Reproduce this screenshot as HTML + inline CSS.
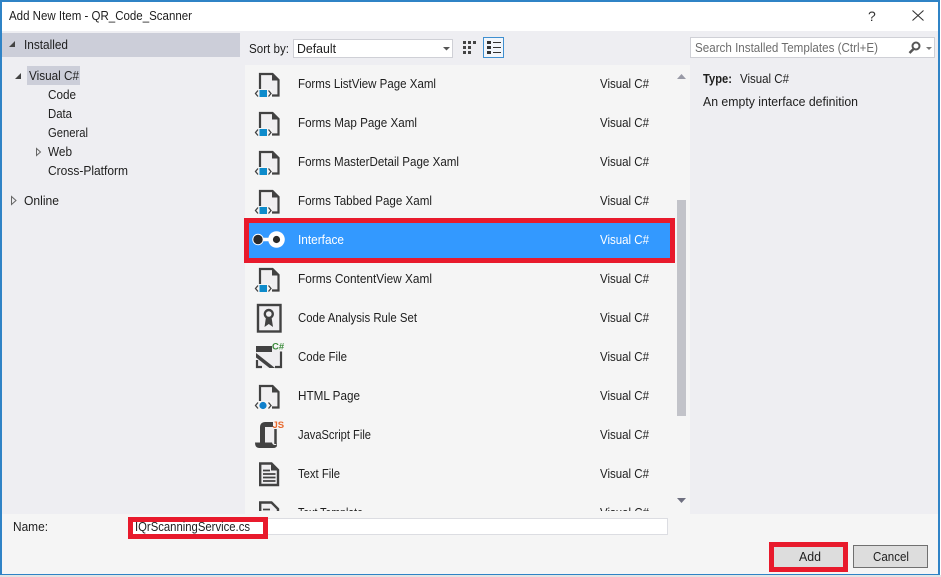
<!DOCTYPE html>
<html>
<head>
<meta charset="utf-8">
<title>Add New Item - QR_Code_Scanner</title>
<style>
html,body{margin:0;padding:0;width:941px;height:577px;overflow:hidden;background:#fff}
svg{display:block}
text{font-family:"Liberation Sans",sans-serif;font-size:12.5px;fill:#1e1e1e}
</style>
</head>
<body>
<svg width="941" height="577" viewBox="0 0 941 577" xmlns="http://www.w3.org/2000/svg">
<defs>
<g id="doc">
<path d="M260 89H272V95H278V80L272 74H260Z" fill="#f0eff1"/>
<path d="M260 89V74H272.500L278.500 80V95.500H272" fill="none" stroke="#424242" stroke-width="2.200"/>
<path d="M272 74V80.500H278" fill="#424242"/>
<path d="M258 90.500L255.500 93.500L258 96.500M268.500 90.500L271 93.500L268.500 96.500" fill="none" stroke="#424242" stroke-width="1.300"/>
</g>
<g id="docx"><use href="#doc"/><rect x="259.500" y="90" width="7.500" height="7" fill="#0e8bcb"/></g>
</defs>

<rect width="941" height="577" fill="#fff"/>
<rect x="0" y="575" width="941" height="2" fill="#e4e4e4"/>
<rect x="1" y="1" width="938" height="573" fill="#f5f5f5" stroke="#2f83c6" stroke-width="2"/>
<rect x="2" y="2" width="936" height="29" fill="#fff"/>
<rect x="2" y="31" width="936" height="483" fill="#eeeef2"/>
<rect x="2" y="514" width="936" height="60" fill="#f5f5f5"/>

<text x="9" y="20" textLength="183" lengthAdjust="spacingAndGlyphs">Add New Item - QR_Code_Scanner</text>
<text x="868" y="21" style="font-size:14px;fill:#333">?</text>
<path d="M912.500 10.500L923.500 20.500M923.500 10.500L912.500 20.500" stroke="#333" stroke-width="1.100" fill="none"/>

<rect x="2" y="33" width="238" height="24" fill="#ccced9"/>
<path d="M15 47L9 47L15 41Z" fill="#444"/>
<text x="24" y="49" textLength="44" lengthAdjust="spacingAndGlyphs">Installed</text>
<rect x="27" y="66" width="53" height="19" fill="#ccced9"/>
<path d="M21 79L15 79L21 73Z" fill="#444"/>
<text x="29" y="80" textLength="50" lengthAdjust="spacingAndGlyphs">Visual C#</text>
<text x="48" y="99" textLength="28" lengthAdjust="spacingAndGlyphs">Code</text>
<text x="48" y="118" textLength="24" lengthAdjust="spacingAndGlyphs">Data</text>
<text x="48" y="137" textLength="40" lengthAdjust="spacingAndGlyphs">General</text>
<path d="M36.500 148.500L36.500 155.500L40.500 152Z" fill="#eeeef2" stroke="#666"/>
<text x="48" y="156" textLength="24" lengthAdjust="spacingAndGlyphs">Web</text>
<text x="48" y="175" textLength="80" lengthAdjust="spacingAndGlyphs">Cross-Platform</text>
<path d="M11.500 196.500L11.500 204.500L16 200.500Z" fill="#eeeef2" stroke="#666"/>
<text x="24" y="205" textLength="35" lengthAdjust="spacingAndGlyphs">Online</text>

<text x="249" y="53" textLength="40" lengthAdjust="spacingAndGlyphs">Sort by:</text>
<rect x="293.500" y="39.500" width="159" height="18" fill="#fff" stroke="#cfd0d6"/>
<text x="297" y="53" textLength="39" lengthAdjust="spacingAndGlyphs">Default</text>
<path d="M443 47H450L446.500 50.500Z" fill="#555"/>
<g fill="#444">
<rect x="463" y="41" width="3" height="3"/><rect x="468" y="41" width="3" height="3"/><rect x="473" y="41" width="3" height="3"/>
<rect x="463" y="46" width="3" height="3"/><rect x="468" y="46" width="3" height="3"/>
<rect x="463" y="51" width="3" height="3"/><rect x="468" y="51" width="3" height="3"/>
</g>
<rect x="483.500" y="37.500" width="20" height="20" fill="#f2f6fb" stroke="#3f8fd0"/>
<g fill="#333">
<rect x="487" y="41" width="4" height="3"/><rect x="487" y="46" width="4" height="3"/><rect x="487" y="51" width="4" height="3"/>
<rect x="493" y="42" width="8" height="1"/><rect x="493" y="47" width="8" height="1"/><rect x="493" y="52" width="8" height="1"/>
</g>

<rect x="690.500" y="37.500" width="244" height="20" fill="#fff" stroke="#cfd0d6"/>
<text x="695" y="52" textLength="183" lengthAdjust="spacingAndGlyphs" style="fill:#6d6d6d">Search Installed Templates (Ctrl+E)</text>
<circle cx="916" cy="46" r="3.500" fill="none" stroke="#555" stroke-width="2"/>
<path d="M913.500 49L909.500 53" stroke="#555" stroke-width="2.500"/>
<path d="M926 47H932L929 50Z" fill="#777"/>

<rect x="245" y="65" width="445" height="446" fill="#f5f5f5"/>

<path d="M677 79L681.500 74L686 79Z" fill="#999aa6"/>
<rect x="677" y="200" width="9" height="216" fill="#c2c3c9"/>
<path d="M677 498H686L681.500 503Z" fill="#6f7080"/>

<use href="#docx"/>
<use href="#docx" y="39"/>
<use href="#docx" y="78"/>
<use href="#docx" y="117"/>
<use href="#docx" y="195"/>

<text x="298" y="88" textLength="138" lengthAdjust="spacingAndGlyphs">Forms ListView Page Xaml</text>
<text x="298" y="127" textLength="119" lengthAdjust="spacingAndGlyphs">Forms Map Page Xaml</text>
<text x="298" y="166" textLength="161" lengthAdjust="spacingAndGlyphs">Forms MasterDetail Page Xaml</text>
<text x="298" y="205" textLength="134" lengthAdjust="spacingAndGlyphs">Forms Tabbed Page Xaml</text>
<text x="298" y="283" textLength="134" lengthAdjust="spacingAndGlyphs">Forms ContentView Xaml</text>
<text x="298" y="322" textLength="119" lengthAdjust="spacingAndGlyphs">Code Analysis Rule Set</text>
<text x="298" y="361" textLength="49" lengthAdjust="spacingAndGlyphs">Code File</text>
<text x="298" y="400" textLength="62" lengthAdjust="spacingAndGlyphs">HTML Page</text>
<text x="298" y="439" textLength="73" lengthAdjust="spacingAndGlyphs">JavaScript File</text>
<text x="298" y="478" textLength="42" lengthAdjust="spacingAndGlyphs">Text File</text>

<g>
<text x="600" y="88" textLength="49" lengthAdjust="spacingAndGlyphs">Visual C#</text>
<text x="600" y="127" textLength="49" lengthAdjust="spacingAndGlyphs">Visual C#</text>
<text x="600" y="166" textLength="49" lengthAdjust="spacingAndGlyphs">Visual C#</text>
<text x="600" y="205" textLength="49" lengthAdjust="spacingAndGlyphs">Visual C#</text>
<text x="600" y="283" textLength="49" lengthAdjust="spacingAndGlyphs">Visual C#</text>
<text x="600" y="322" textLength="49" lengthAdjust="spacingAndGlyphs">Visual C#</text>
<text x="600" y="361" textLength="49" lengthAdjust="spacingAndGlyphs">Visual C#</text>
<text x="600" y="400" textLength="49" lengthAdjust="spacingAndGlyphs">Visual C#</text>
<text x="600" y="439" textLength="49" lengthAdjust="spacingAndGlyphs">Visual C#</text>
<text x="600" y="478" textLength="49" lengthAdjust="spacingAndGlyphs">Visual C#</text>
<text x="600" y="517" textLength="49" lengthAdjust="spacingAndGlyphs">Visual C#</text>
</g>

<!-- selected row -->
<rect x="246.500" y="220.500" width="426" height="40" fill="#3399ff" stroke="#e81a2c" stroke-width="5"/>
<text x="298" y="244" textLength="46" lengthAdjust="spacingAndGlyphs" style="fill:#fff">Interface</text>
<text x="600" y="244" textLength="49" lengthAdjust="spacingAndGlyphs" style="fill:#fff">Visual C#</text>
<path d="M260 239.500H270" stroke="#fff" stroke-width="3.500"/>
<circle cx="258" cy="239.500" r="5.200" fill="#2b2b2b" stroke="#fff" stroke-width="1"/>
<circle cx="276.500" cy="239.500" r="8.300" fill="#fff"/>
<circle cx="276.500" cy="239.500" r="3.600" fill="#2b2b2b"/>

<!-- code analysis -->
<rect x="258" y="305" width="22.500" height="26.500" fill="#f0eff1" stroke="#424242" stroke-width="2.400"/>
<circle cx="268.800" cy="314" r="4" fill="none" stroke="#424242" stroke-width="2.400"/>
<path d="M266 317L264.500 327L268.800 324L273 327L271.500 317Z" fill="#424242"/>

<!-- code file -->
<path d="M256 346H273L282 352V368H256Z" fill="#efeef0"/>
<path d="M256 346H272V352H256Z" fill="#424242"/>
<path d="M256 353L275 368H269.500L256 357.500Z" fill="#424242"/>
<path d="M257 360V367H262M275 367H281V351.500" fill="none" stroke="#424242" stroke-width="2.200"/>
<text x="272" y="349.500" font-weight="bold" style="font-size:9.500px;fill:#3a8a3a">C#</text>

<!-- html -->
<use href="#doc" y="312"/>
<circle cx="263" cy="405.500" r="3.600" fill="#0e7fcb"/>

<!-- js -->
<path d="M265 427H274V443H265Z" fill="#f0eff1"/>
<path d="M273 424.500H265Q262.500 424.500 262.500 427V444" fill="none" stroke="#424242" stroke-width="5"/>
<path d="M275.500 429V444" fill="none" stroke="#424242" stroke-width="2.500"/>
<path d="M255 442.500H272Q272.500 445 275 445Q277 445 277 442.500V445Q277 448 273 448H259Q255 448 255 442.500Z" fill="#424242"/>
<text x="272.500" y="428" font-weight="bold" style="font-size:9.500px;fill:#e8692d">JS</text>

<!-- text file -->
<path d="M260.200 463.500H271.500L278 470V485H260.200Z" fill="#f0eff1" stroke="#424242" stroke-width="2.400"/>
<path d="M271 464V470.500H278" fill="#424242"/>
<path d="M263 470.500H270M263 474H275.500M263 477.500H275.500M263 481H275.500" stroke="#424242" stroke-width="1.700"/>

<!-- partially hidden row -->
<path d="M260.200 511V502.500H271.500L278 509V511" fill="#f0eff1" stroke="#424242" stroke-width="2.400"/>
<path d="M263 509.500H270" stroke="#424242" stroke-width="1.700"/>
<text x="298" y="517" textLength="65" lengthAdjust="spacingAndGlyphs">Text Template</text>
<rect x="245" y="511" width="445" height="3" fill="#f5f5f5"/>
<rect x="2" y="514" width="936" height="8" fill="#f5f5f5"/>

<text x="703" y="83" font-weight="bold" textLength="29" lengthAdjust="spacingAndGlyphs">Type:</text>
<text x="740" y="83" textLength="49" lengthAdjust="spacingAndGlyphs">Visual C#</text>
<text x="703" y="106" textLength="155" lengthAdjust="spacingAndGlyphs">An empty interface definition</text>

<!-- footer -->
<text x="13" y="531" textLength="35" lengthAdjust="spacingAndGlyphs">Name:</text>
<rect x="130.500" y="518.500" width="537" height="16" fill="#fff" stroke="#dcdde2"/>
<rect x="130.500" y="519.500" width="135" height="17" fill="#fff" stroke="#e81a2c" stroke-width="5"/>
<text x="135" y="531" textLength="115" lengthAdjust="spacingAndGlyphs">IQrScanningService.cs</text>

<rect x="771.500" y="544.500" width="74" height="25" fill="#dddddd" stroke="#e81a2c" stroke-width="5"/>
<text x="799" y="561" textLength="22" lengthAdjust="spacingAndGlyphs">Add</text>
<rect x="853.500" y="545.500" width="74" height="22" fill="#dddddd" stroke="#707070"/>
<text x="873" y="561" textLength="36" lengthAdjust="spacingAndGlyphs">Cancel</text>
</svg>
</body>
</html>
